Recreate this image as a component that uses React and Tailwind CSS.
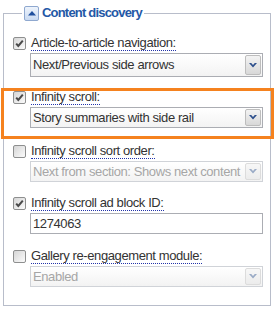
import React from "react";

const font = { fontFamily: '"Liberation Sans", Arial, sans-serif' };

function Check({ checked }) {
  return (
    <div className="relative h-[13px] w-[13px] shrink-0 rounded-[2px] border border-[#8e8f8f] bg-gradient-to-br from-[#d6d6d6] to-[#fbfbfb]">
      {checked && (
        <svg className="absolute left-[0px] top-[0px]" width="11" height="11" viewBox="0 0 11 11">
          <path d="M2.2 5.6 L4.3 8 L8.8 2.6" fill="none" stroke="#4a4a4a" strokeWidth="2" />
        </svg>
      )}
    </div>
  );
}

function Chevron({ disabled }) {
  return (
    <svg width="8" height="5" viewBox="0 0 8 5">
      <polygon points="0,0 2.2,0 4,1.9 5.8,0 8,0 4,4.6" fill={disabled ? "#9aabc6" : "#2d4f8c"} />
    </svg>
  );
}

function Label({ children }) {
  return (
    <div className="flex h-[16px] items-center">
      <span className="border-b border-dotted border-[#2233aa] text-[13px] leading-[14px] tracking-[-0.4px] text-[#333333]">
        {children}
      </span>
    </div>
  );
}

function Select({ text, disabled, tall }) {
  return (
    <div
      className={`flex ${tall ? "h-[24px]" : "h-[21px]"} items-center border ${
        disabled ? "border-[#d0d3d8]" : "border-[#abadb3]"
      } bg-gradient-to-b from-white to-[#f3f3f3] pl-[2px] pr-[1px]`}
    >
      <span
        className={`flex-1 overflow-hidden whitespace-nowrap text-[13px] leading-[16px] tracking-[-0.4px] ${
          disabled ? "text-[#a6a6a6]" : "text-[#333333]"
        }`}
      >
        {text}
      </span>
      <div
        className={`flex ${tall ? "h-[20px]" : "h-[17px]"} w-[16px] items-center justify-center rounded-[2px] border ${
          disabled ? "border-[#dcdcdc] from-[#f7f7f7] to-[#ececec]" : "border-[#bdbdbd] from-[#f3f3f3] to-[#d8d8d8]"
        } bg-gradient-to-b`}
      >
        <Chevron disabled={disabled} />
      </div>
    </div>
  );
}

function Row({ label, checked, children, className = "" }) {
  return (
    <div className={className}>
      <div className="flex items-center gap-[5px]">
        <Check checked={checked} />
        <Label>{label}</Label>
      </div>
      <div className="ml-[17px] mt-[2px]">{children}</div>
    </div>
  );
}

export default function App() {
  return (
    <div className="relative h-[311px] w-[276px] bg-white" style={font}>
      <fieldset className="ml-[3px] mt-[5px] w-[268px] border border-[#b8bdca] pb-[18px] pl-[9px] pr-[7px]">
        <legend className="ml-[9px] flex h-[16px] items-center px-[2px]">
          <div className="flex h-[15px] w-[15px] items-center justify-center rounded-[2px] border border-[#8fa8cf] bg-gradient-to-b from-[#eef4fc] to-[#c9daf2]">
            <svg width="8" height="5" viewBox="0 0 8 5">
              <polygon points="4,0 8,4.5 0,4.5" fill="#1f4f9e" />
            </svg>
          </div>
          <span className="ml-[3px] text-[13px] font-bold leading-[16px] tracking-[-0.8px] text-[#2458a6]">
            Content discovery
          </span>
        </legend>
        <Row label="Article-to-article navigation:" checked className="mt-[14px]">
          <Select text="Next/Previous side arrows" tall />
        </Row>
        <Row label="Infinity scroll:" checked className="mt-[12px]">
          <Select text="Story summaries with side rail" />
        </Row>
        <Row label="Infinity scroll sort order:" className="mt-[15px]">
          <Select text="Next from section: Shows next content" disabled />
        </Row>
        <Row label="Infinity scroll ad block ID:" checked className="mt-[13px]">
          <div className="flex h-[21px] items-center border border-[#abadb3] bg-white pl-[2px]">
            <span className="text-[13px] leading-[16px] tracking-[-0.4px] text-[#333333]">1274063</span>
          </div>
        </Row>
        <Row label="Gallery re-engagement module:" className="mt-[14px]">
          <Select text="Enabled" disabled />
        </Row>
      </fieldset>
      <div className="absolute left-[1px] top-[83px] h-[51px] w-[273px] border-[3px] border-[#f5821f]" />
    </div>
  );
}
